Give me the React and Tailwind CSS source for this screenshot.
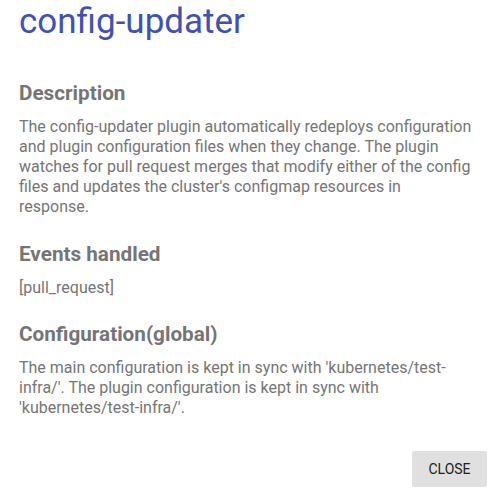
export default function App() {
    const plugin = {
        name: "config-updater",
        // the reference breaks before the last word; force it so the wrap matches
        description: [
            "The config-updater plugin automatically redeploys configuration and plugin configuration files when they change. The plugin watches for pull request merges that modify either of the config files and updates the cluster's configmap resources in",
            "response.",
        ],
        events: "[pull_request]",
        config:
            "The main configuration is kept in sync with 'kubernetes/test-infra/'. The plugin configuration is kept in sync with 'kubernetes/test-infra/'.",
    };

    return (
        <div
            className="flex flex-col w-full h-[498px] bg-white overflow-hidden"
            style={{ fontFamily: "Roboto, 'Liberation Sans', sans-serif" }}
        >
            {/* CONTENT */}
            <div className="pt-[1px] pl-[19px] pr-[10px]">
                <h2 className="text-[35px] leading-[41px] font-normal text-[#3f51b5]">
                    {plugin.name}
                </h2>

                <h3 className="mt-[39px] text-[20.7px] leading-[24px] font-bold text-[#757575]">
                    Description
                </h3>
                <p className="mt-[12px] text-[16px] leading-[20px] text-[#757575]">
                    {plugin.description[0]}
                    <br />
                    {plugin.description[1]}
                </p>

                <h3 className="mt-[25px] text-[20.7px] leading-[24px] font-bold text-[#757575]">
                    Events handled
                </h3>
                <p className="mt-[12px] text-[16px] leading-[20px] text-[#757575]">
                    {plugin.events}
                </p>

                <h3 className="mt-[24px] text-[20.7px] leading-[24px] font-bold text-[#757575]">
                    Configuration(global)
                </h3>
                <p className="mt-[12px] text-[16px] leading-[20px] text-[#757575]">
                    {plugin.config}
                </p>
            </div>

            <div className="flex-1" />

            {/* ACTIONS */}
            <div className="flex justify-end pr-[10px] pb-[11px]">
                <button className="flex items-center justify-center w-[75px] h-[36px] rounded-[2px] bg-[#e0e0e0] text-[14px] font-normal text-[#212121]">
                    CLOSE
                </button>
            </div>
        </div>
    );
}
